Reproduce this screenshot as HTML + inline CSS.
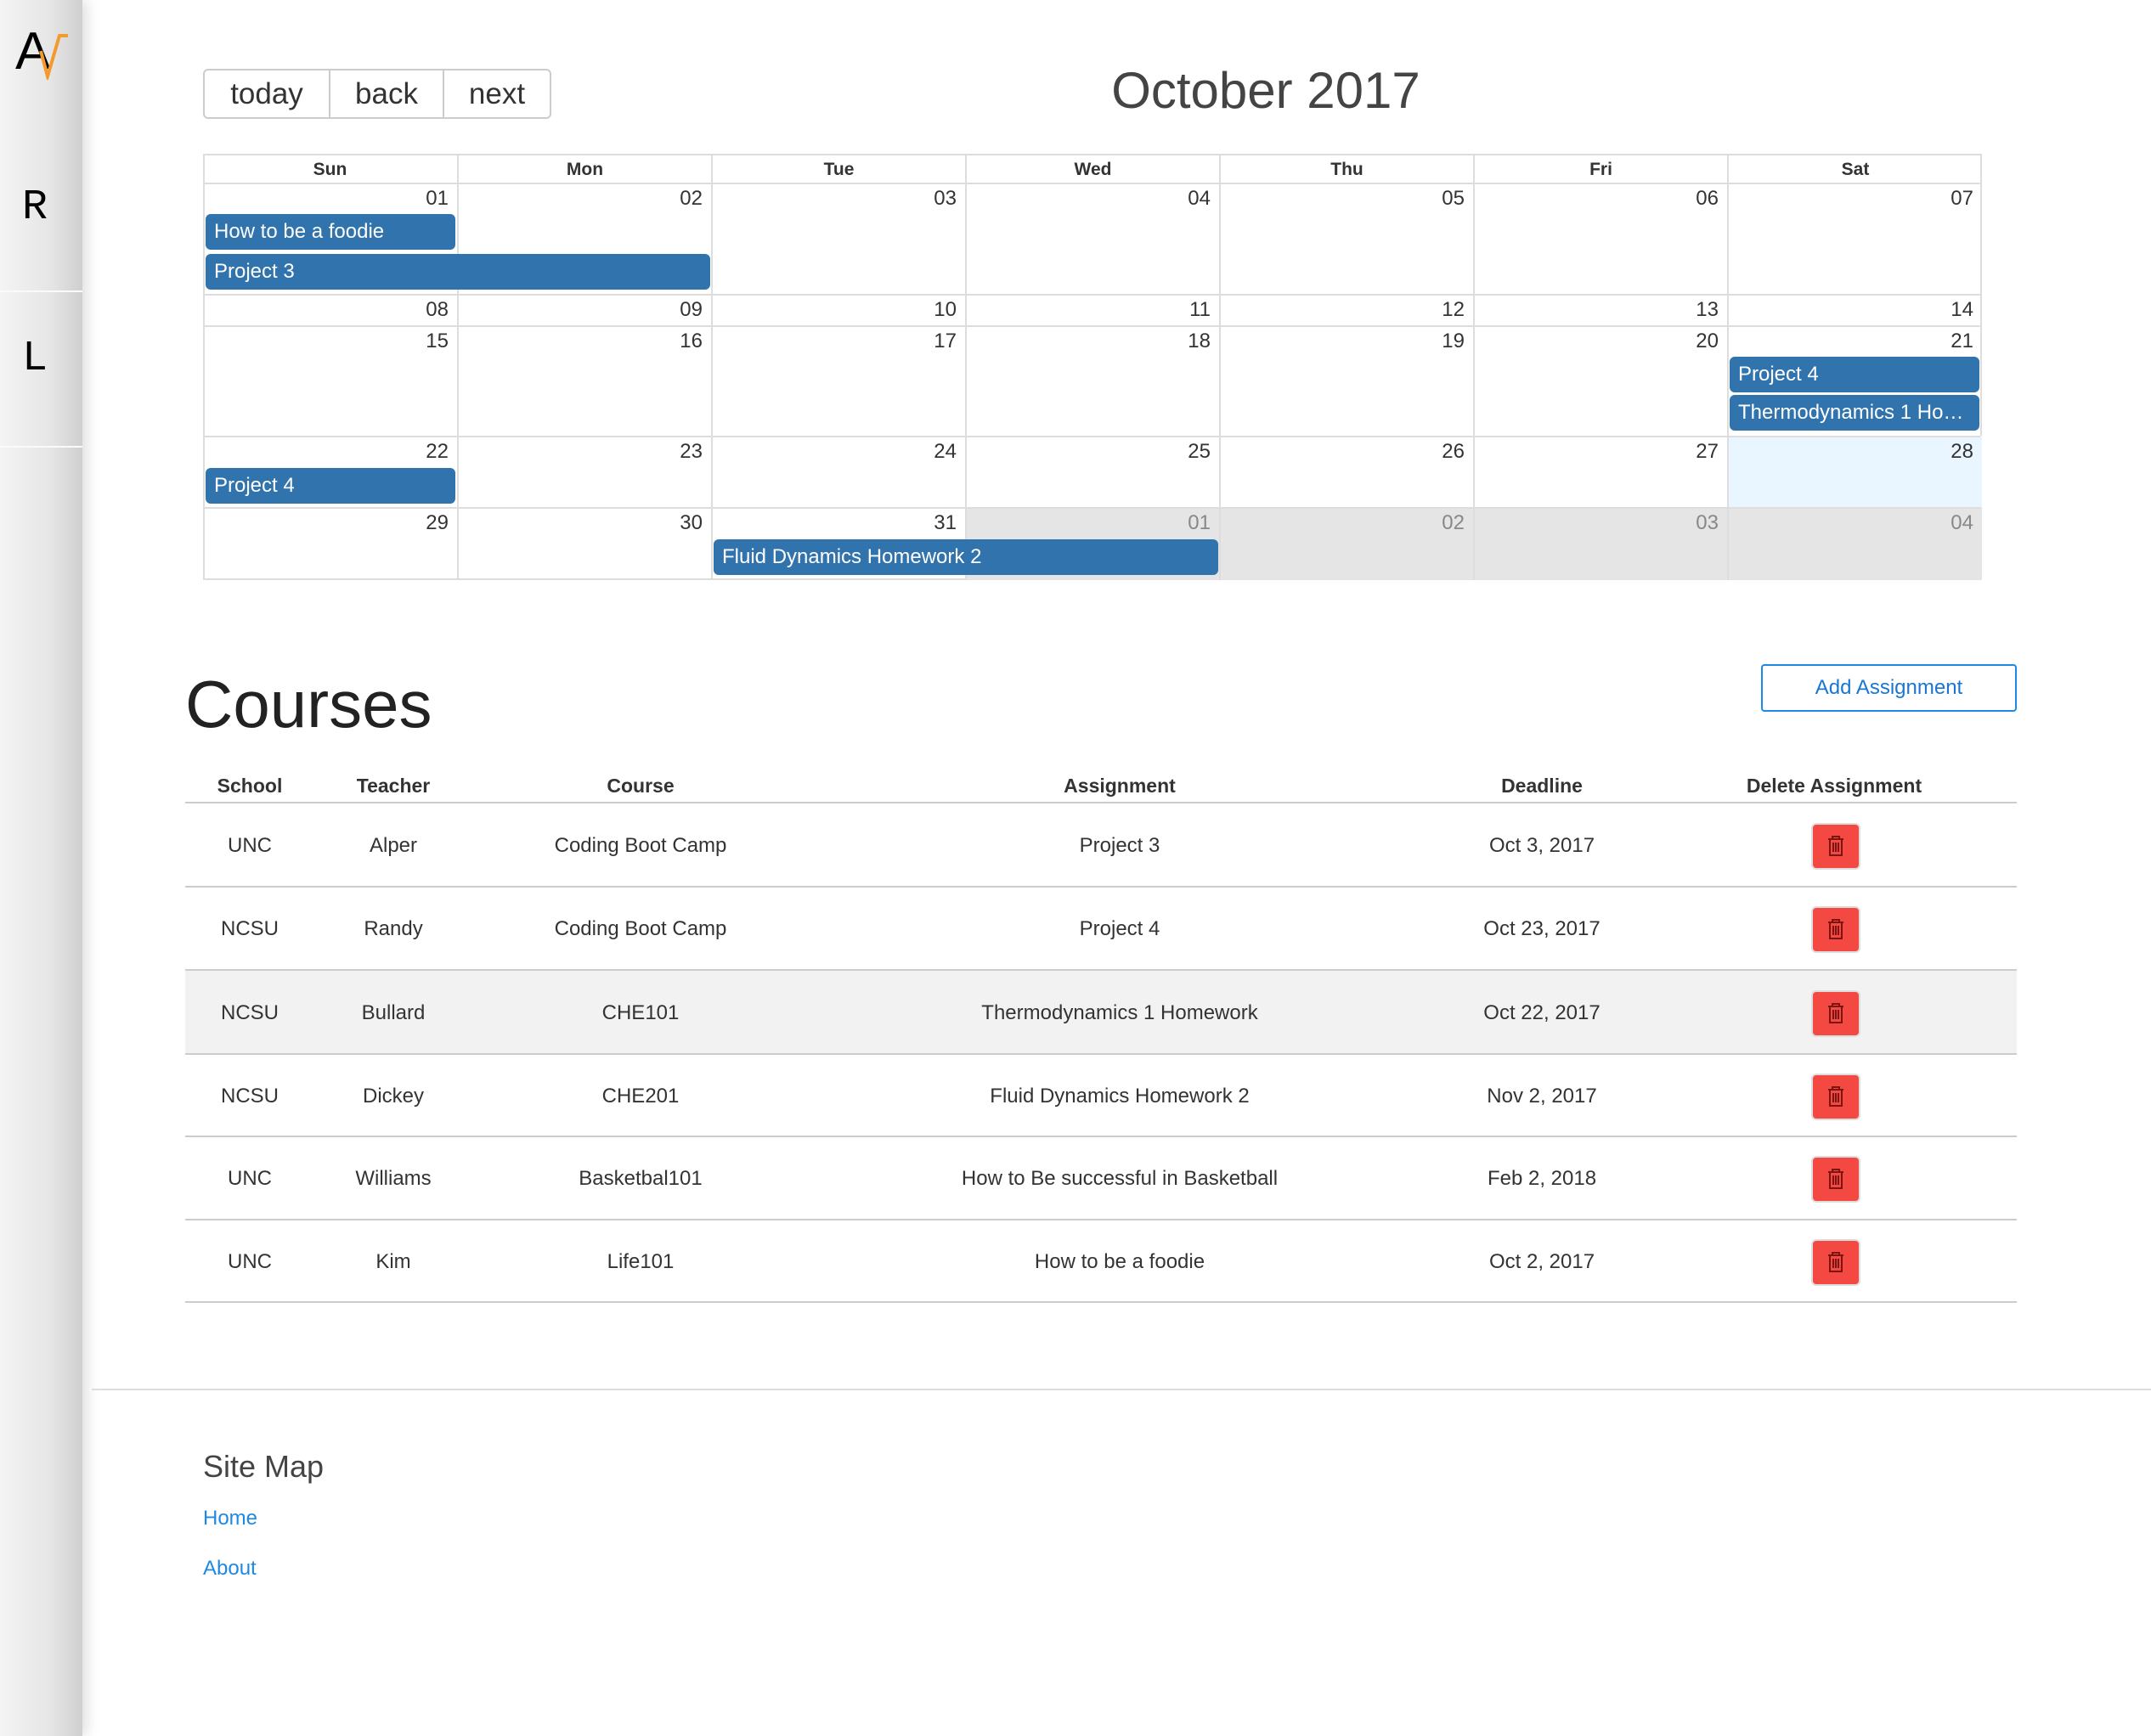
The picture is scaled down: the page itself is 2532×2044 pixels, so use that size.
<!DOCTYPE html>
<html><head><meta charset="utf-8"><style>
*{box-sizing:border-box;margin:0;padding:0}
body{width:2532px;height:2044px;position:relative;background:#fff;font-family:"Liberation Sans",sans-serif;color:#333;overflow:hidden;font-size:24px}
.abs{position:absolute}
.side{left:0;top:0;width:97px;height:2044px;background:linear-gradient(90deg,#f4f4f4 0%,#e6e6e6 60%,#cfcfcf 100%);box-shadow:6px 0 14px rgba(0,0,0,.12)}
.sep{left:0;width:97px;height:2px;background:#fafafa}
.btns{left:239px;top:81px;width:410px;height:59px;border:2px solid #ccc;border-radius:6px;display:flex;font-size:35px;color:#333}
.btns div{display:flex;align-items:center;justify-content:center;border-right:2px solid #ccc}
.btns div:last-child{border-right:none}
.cal{left:239px;top:181px;width:2094px;border:2px solid #ddd}
.hd,.cell{position:absolute;border-left:2px solid #ddd}
.hd{font-size:21px;font-weight:bold;text-align:center;top:0;height:34px;line-height:34px;border-bottom:2px solid #ddd}
.cell{font-size:24px;text-align:right;padding:3px 10px 0 0;color:#333}
.ev{position:absolute;background:#3174ad;color:#fff;font-size:24px;line-height:42px;height:42px;padding-left:10px;border-radius:6px;white-space:nowrap;overflow:hidden}
.row{position:absolute;left:0;width:2090px;border-top:2px solid #ddd}
.tr{position:absolute;left:218px;width:2156px;border-bottom:2px solid #ccc;font-size:24px}
.c{position:absolute;transform:translateX(-50%);white-space:nowrap;font-size:24px}
.del{position:absolute;left:2132px;width:58px;height:55px;background:#f44842;border-radius:6px;border:2px solid #ddd}
</style></head><body>
<div class="abs side"></div>
<div class="abs sep" style="top:342px"></div>
<div class="abs sep" style="top:525px"></div>
<div class="abs" style="left:18px;top:30px;font-size:62px;line-height:62px;color:#000">A</div>
<svg class="abs" style="left:44px;top:38px" width="40" height="56"><path d="M4 22 L12 52 L26 4 L36 4" stroke="#f39a2c" stroke-width="4" fill="none"/></svg>
<div class="abs" style="left:26px;top:216px;font-size:50px;font-family:'Liberation Mono',monospace;color:#000">R</div>
<div class="abs" style="left:26px;top:394px;font-size:50px;font-family:'Liberation Mono',monospace;color:#000">L</div>

<div class="abs btns"><div style="width:148px">today</div><div style="width:134px">back</div><div style="flex:1">next</div></div>
<div class="abs" style="left:1290px;top:72px;width:400px;text-align:center;font-size:60px;color:#444">October 2017</div>

<div class="abs cal" style="height:502px">
<div class="hd" style="left:-2px;width:299px;border-left:none">Sun</div>
<div class="hd" style="left:297px;width:299px">Mon</div>
<div class="hd" style="left:596px;width:299px">Tue</div>
<div class="hd" style="left:895px;width:299px">Wed</div>
<div class="hd" style="left:1194px;width:299px">Thu</div>
<div class="hd" style="left:1493px;width:299px">Fri</div>
<div class="hd" style="left:1792px;width:300px">Sat</div>
<div class="abs" style="left:1792px;top:330px;width:300px;height:84px;background:#eaf6ff"></div>
<div class="abs" style="left:895px;top:414px;width:1197px;height:86px;background:#e5e5e5"></div>
<div id="grid"></div>
</div>
<script>
var g=document.getElementById('grid');
var rows=[[34,131,1],[165,37,8],[202,130,15],[332,84,22],[416,84,29]];
var xs=[-2,297,596,895,1194,1493,1792];
var html='';
rows.forEach(function(r,i){
 if(i>0)html+='<div class="row" style="top:'+(r[0]-2)+'px"></div>';
 for(var d=0;d<7;d++){
  var n=r[2]+d,col='#333';
  if(n>31){n-=31;col='#888';}
  html+='<div class="cell" style="left:'+xs[d]+'px;top:'+r[0]+'px;width:'+(d==6?300:299)+'px;height:'+r[1]+'px;color:'+col+';'+(d==0?'border-left:none':'')+'">'+(n<10?'0'+n:n)+'</div>';
 }
});
g.innerHTML=html;
</script>
<div class="ev" style="left:242px;top:252px;width:294px">How to be a foodie</div>
<div class="ev" style="left:242px;top:299px;width:594px">Project 3</div>
<div class="ev" style="left:2036px;top:420px;width:294px">Project 4</div>
<div class="ev" style="left:2036px;top:465px;width:294px">Thermodynamics 1 Ho…</div>
<div class="ev" style="left:242px;top:551px;width:294px">Project 4</div>
<div class="ev" style="left:840px;top:635px;width:594px">Fluid Dynamics Homework 2</div>

<div class="abs" style="left:218px;top:784px;font-size:78px;color:#222">Courses</div>
<div class="abs" style="left:2073px;top:782px;width:301px;height:56px;border:2px solid #1e88e5;border-radius:4px;color:#1976d2;font-size:24px;display:flex;align-items:center;justify-content:center">Add Assignment</div>

<div class="tr" style="top:900px;height:46px;font-weight:bold">
<span class="c" style="left:76px;top:12px;font-size:23px">School</span><span class="c" style="left:245px;top:12px;font-size:23px">Teacher</span><span class="c" style="left:536px;top:12px;font-size:23px">Course</span><span class="c" style="left:1100px;top:12px;font-size:23px">Assignment</span><span class="c" style="left:1597px;top:12px;font-size:23px">Deadline</span><span class="c" style="left:1941px;top:12px;font-size:23px">Delete Assignment</span>
</div>
<div id="tb"></div>
<script>
var data=[["UNC","Alper","Coding Boot Camp","Project 3","Oct 3, 2017"],["NCSU","Randy","Coding Boot Camp","Project 4","Oct 23, 2017"],["NCSU","Bullard","CHE101","Thermodynamics 1 Homework","Oct 22, 2017"],["NCSU","Dickey","CHE201","Fluid Dynamics Homework 2","Nov 2, 2017"],["UNC","Williams","Basketbal101","How to Be successful in Basketball","Feb 2, 2018"],["UNC","Kim","Life101","How to be a foodie","Oct 2, 2017"]];
var cx=[76,245,536,1100,1597];var h='';var tops=[946,1045,1143,1242,1339,1437,1534];
data.forEach(function(r,i){
 var t=tops[i],ht=tops[i+1]-t;
 h+='<div class="tr" style="top:'+t+'px;height:'+ht+'px;'+(i==2?'background:#f2f2f2':'')+'">';
 r.forEach(function(v,j){h+='<span class="c" style="left:'+cx[j]+'px;top:'+(ht/2-14)+'px">'+v+'</span>';});
 h+='</div><div class="del" style="top:'+(t+ht/2-27)+'px"><svg width="54" height="51" viewBox="0 0 54 51"><path d="M18 17h18M23 17v-3h8v3M20 17v19h14V17M24 21v11M27 21v11M30 21v11" stroke="#7a1512" stroke-width="2" fill="none"/></svg></div>';
});
document.getElementById('tb').innerHTML=h;
</script>

<div class="abs" style="left:108px;top:1635px;width:2424px;height:2px;background:#ddd"></div>
<div class="abs" style="left:239px;top:1706px;font-size:36px;color:#444">Site Map</div>
<div class="abs" style="left:239px;top:1774px;font-size:24px;color:#1e88e5">Home</div>
<div class="abs" style="left:239px;top:1833px;font-size:24px;color:#1e88e5">About</div>
</body></html>
